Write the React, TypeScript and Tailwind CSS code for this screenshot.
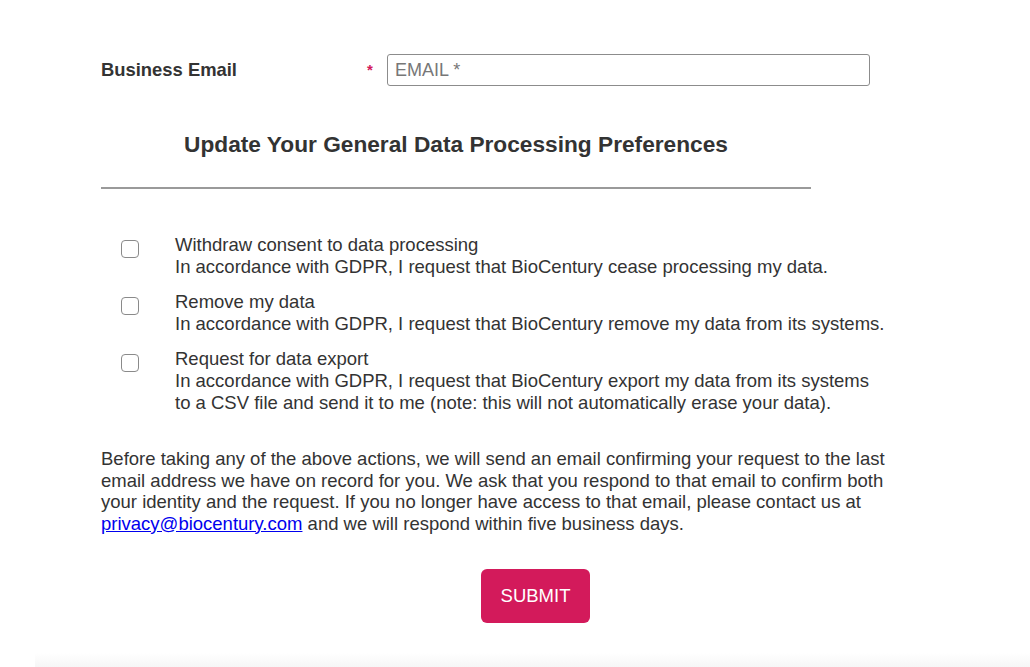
import React from "react";

const font = { fontFamily: '"Liberation Sans", Arial, Helvetica, sans-serif' };

function Row({ title, lines }: { title: string; lines: string[] }) {
  return (
    <div className="flex items-start">
      <div className="w-[74px] flex justify-start pl-[20px] pt-[6px]">
        <span className="block w-[18px] h-[18px] rounded-[4px] border border-[#8a8a8a] bg-white" />
      </div>
      <div className="text-[18.5px] leading-[22px] text-[#333] whitespace-nowrap">
        <div>{title}</div>
        {lines.map((l, i) => (
          <div key={i}>{l}</div>
        ))}
      </div>
    </div>
  );
}

export default function App() {
  return (
    <div className="w-[1030px] h-[667px] bg-white relative overflow-hidden" style={font}>
      <div className="pl-[101px] pt-[54px]">
        <div className="flex items-center h-[32px]">
          <div className="w-[266px] text-[18.4px] font-bold text-[#333]">Business Email</div>
          <div className="w-[20px] text-[#d31a5b] text-[15px] font-bold">*</div>
          <div className="w-[483px] h-[32px] border border-[#8c8c8c] rounded-[3px] flex items-center pl-[7px] text-[18px] text-[#777]">
            EMAIL *
          </div>
        </div>

        <div className="w-[710px] text-center mt-[45px] text-[22.7px] font-bold text-[#333] leading-[26px]">
          Update Your General Data Processing Preferences
        </div>
        <div className="w-[710px] h-[2px] bg-[#9a9a9a] mt-[30px]" />

        <div className="mt-[45px] flex flex-col gap-[13px]">
          <Row
            title="Withdraw consent to data processing"
            lines={["In accordance with GDPR, I request that BioCentury cease processing my data."]}
          />
          <Row
            title="Remove my data"
            lines={["In accordance with GDPR, I request that BioCentury remove my data from its systems."]}
          />
          <Row
            title="Request for data export"
            lines={[
              "In accordance with GDPR, I request that BioCentury export my data from its systems",
              "to a CSV file and send it to me (note: this will not automatically erase your data).",
            ]}
          />
        </div>

        <div className="mt-[34px] text-[18.5px] leading-[21.5px] text-[#333] whitespace-nowrap">
          <div>Before taking any of the above actions, we will send an email confirming your request to the last</div>
          <div>email address we have on record for you. We ask that you respond to that email to confirm both</div>
          <div>your identity and the request. If you no longer have access to that email, please contact us at</div>
          <div>
            <a className="text-[#0000ee] underline" href="#">privacy@biocentury.com</a> and we will respond within five business days.
          </div>
        </div>

        <div className="mt-[35px] ml-[380px]">
          <button className="w-[109px] h-[54px] rounded-[6px] bg-[#d31a5b] text-white text-[18.5px]">SUBMIT</button>
        </div>
      </div>
      <div className="absolute left-[35px] right-0 bottom-0 h-[14px] bg-gradient-to-b from-white to-[#f6f6f6]" />
    </div>
  );
}
